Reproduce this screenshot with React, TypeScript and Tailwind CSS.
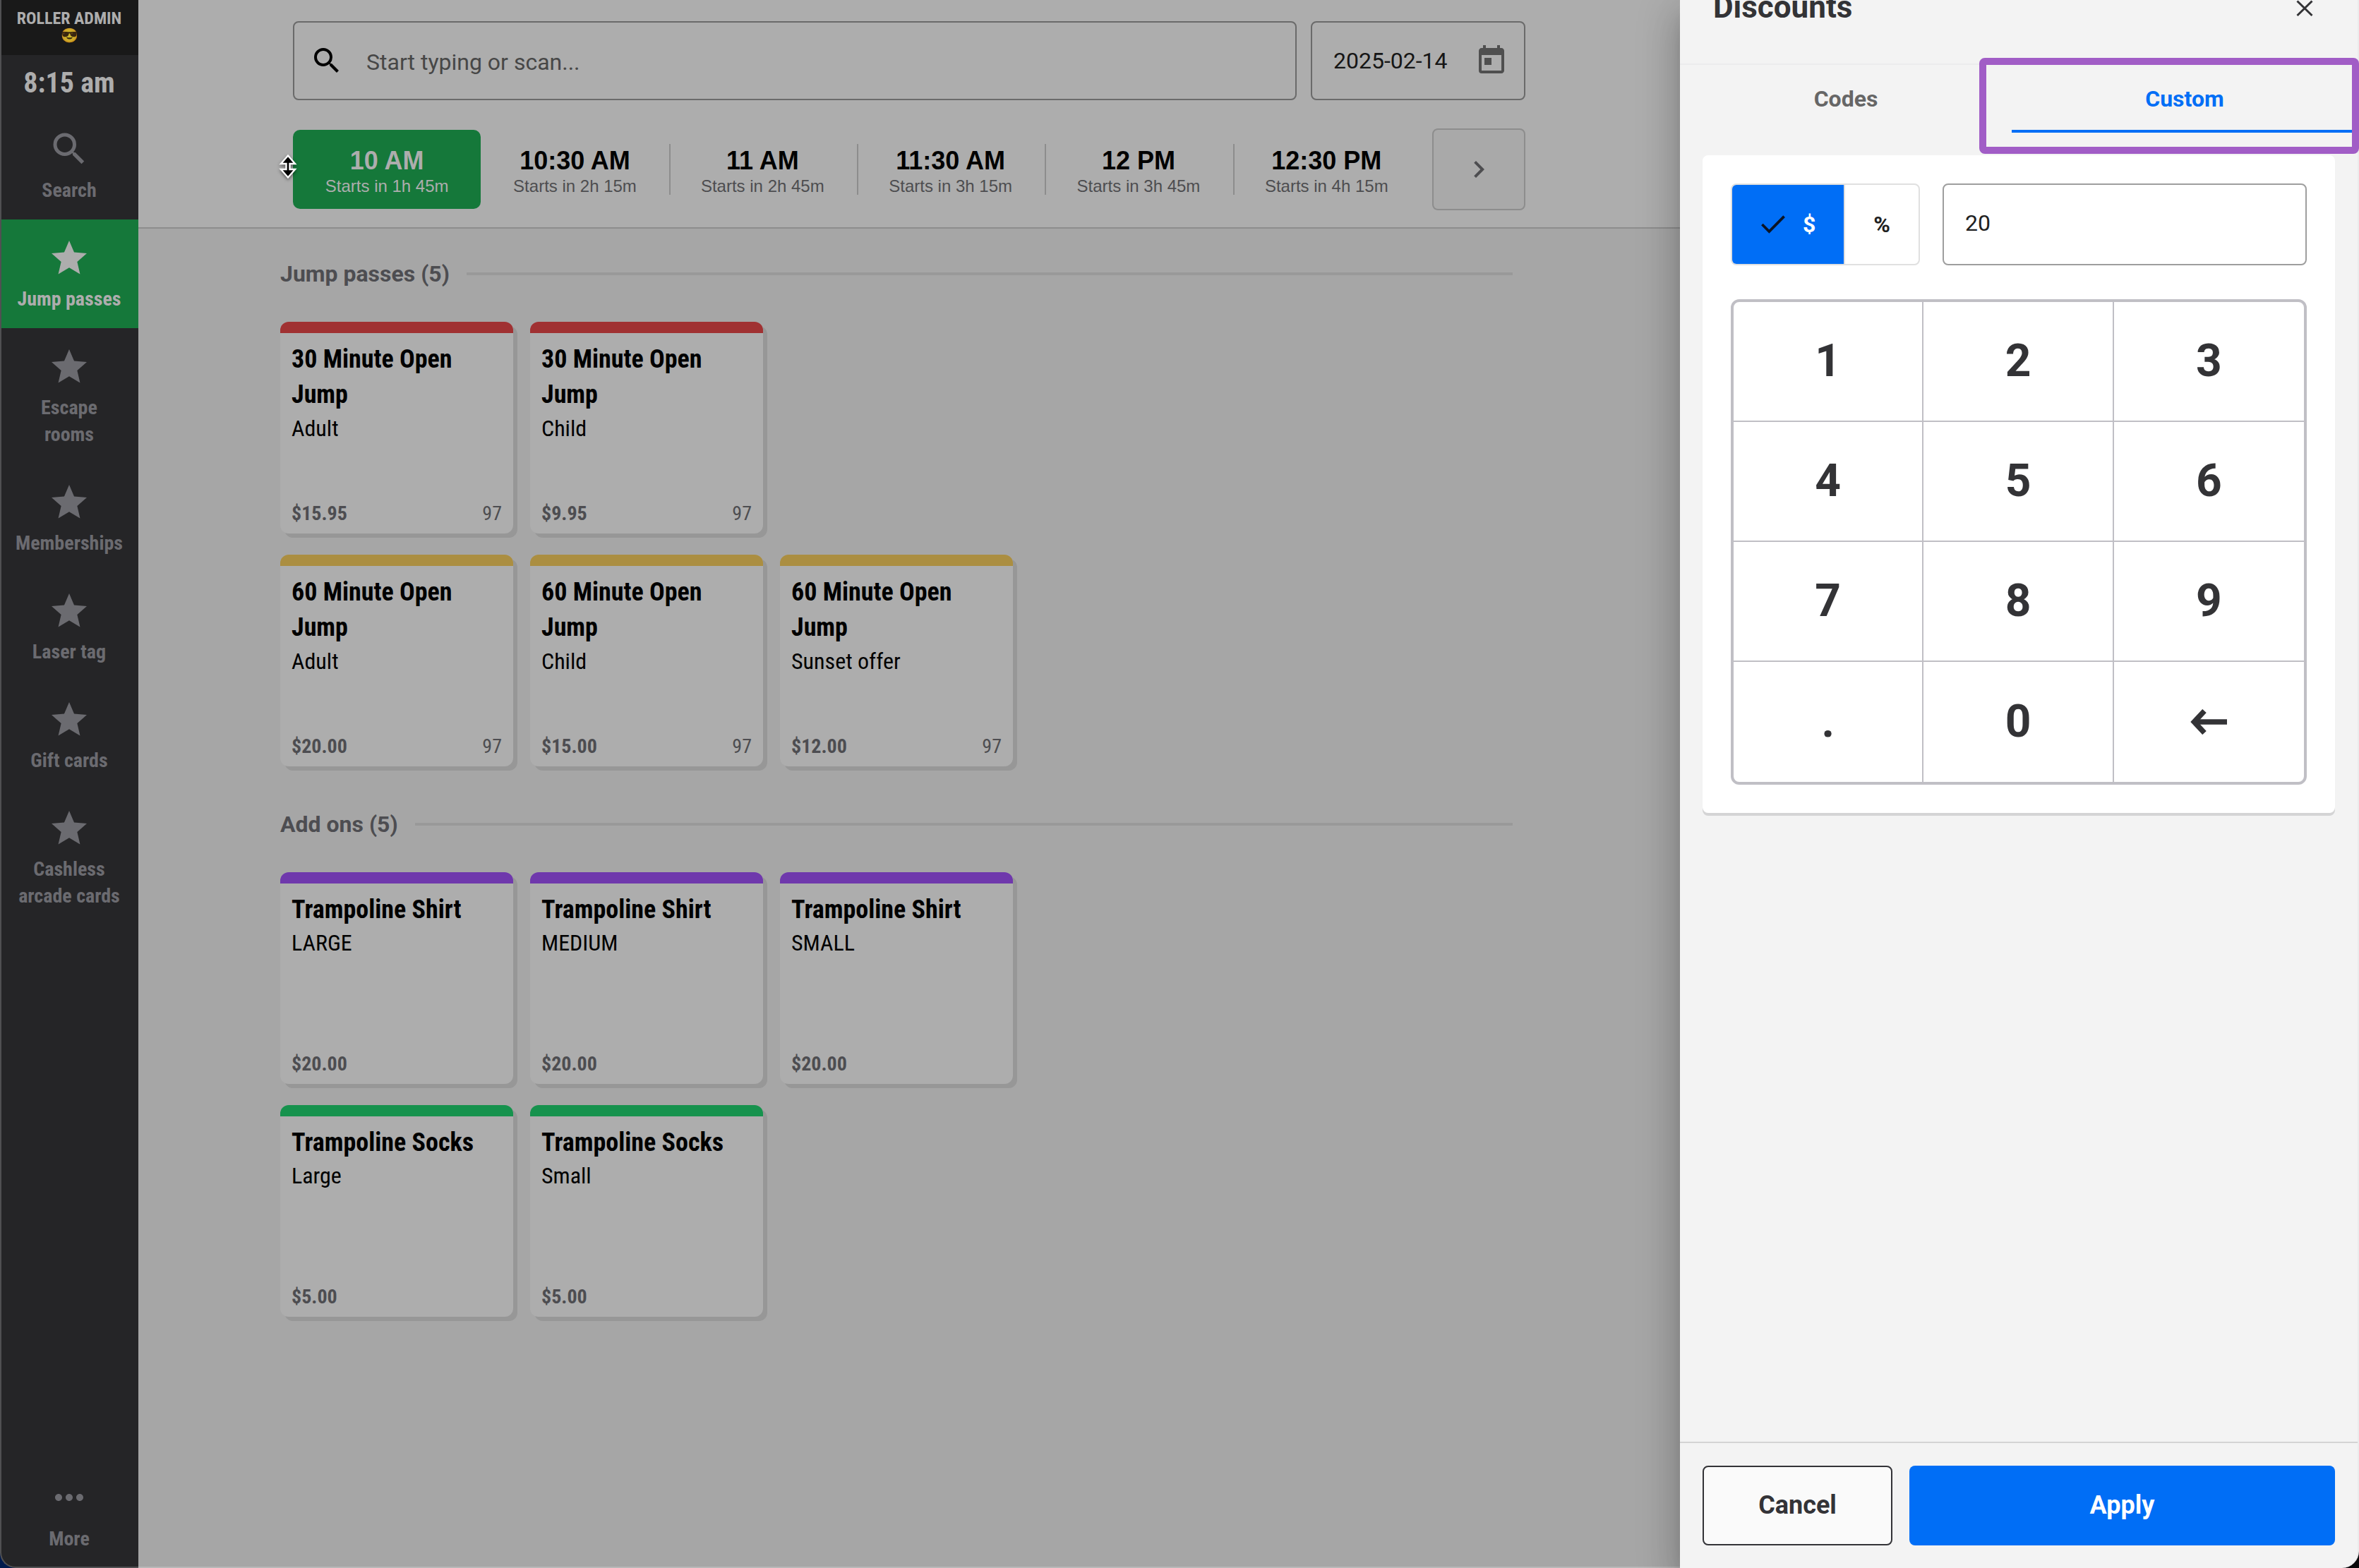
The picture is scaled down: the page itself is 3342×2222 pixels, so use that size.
import { MdChevronRight, MdMoreHoriz, MdSearch, MdStar, MdToday } from "react-icons/md";
import { clsx } from "clsx";

interface Product {
  name: string;
  variant: string;
  price: string;
  stock?: number;
  stripe: string;
}

const RED = "bg-[#a03132]";
const GOLD = "bg-[#ab8e41]";
const PURPLE = "bg-[#6f38ac]";
const GREEN = "bg-[#16924d]";

const navItems = [
  { lines: ["Jump passes"], active: true },
  { lines: ["Escape", "rooms"] },
  { lines: ["Memberships"] },
  { lines: ["Laser tag"] },
  { lines: ["Gift cards"] },
  { lines: ["Cashless", "arcade cards"] },
];

const slots = [
  { time: "10 AM", starts: "Starts in 1h 45m" },
  { time: "10:30 AM", starts: "Starts in 2h 15m" },
  { time: "11 AM", starts: "Starts in 2h 45m" },
  { time: "11:30 AM", starts: "Starts in 3h 15m" },
  { time: "12 PM", starts: "Starts in 3h 45m" },
  { time: "12:30 PM", starts: "Starts in 4h 15m" },
];

const sections: { title: string; rows: Product[][] }[] = [
  {
    title: "Jump passes (5)",
    rows: [
      [
        { name: "30 Minute Open Jump", variant: "Adult", price: "$15.95", stock: 97, stripe: RED },
        { name: "30 Minute Open Jump", variant: "Child", price: "$9.95", stock: 97, stripe: RED },
      ],
      [
        { name: "60 Minute Open Jump", variant: "Adult", price: "$20.00", stock: 97, stripe: GOLD },
        { name: "60 Minute Open Jump", variant: "Child", price: "$15.00", stock: 97, stripe: GOLD },
        { name: "60 Minute Open Jump", variant: "Sunset offer", price: "$12.00", stock: 97, stripe: GOLD },
      ],
    ],
  },
  {
    title: "Add ons (5)",
    rows: [
      [
        { name: "Trampoline Shirt", variant: "LARGE", price: "$20.00", stripe: PURPLE },
        { name: "Trampoline Shirt", variant: "MEDIUM", price: "$20.00", stripe: PURPLE },
        { name: "Trampoline Shirt", variant: "SMALL", price: "$20.00", stripe: PURPLE },
      ],
      [
        { name: "Trampoline Socks", variant: "Large", price: "$5.00", stripe: GREEN },
        { name: "Trampoline Socks", variant: "Small", price: "$5.00", stripe: GREEN },
      ],
    ],
  },
];

const keys = ["1", "2", "3", "4", "5", "6", "7", "8", "9", ".", "0", "back"];

function Sidebar() {
  return (
    <aside className="flex w-[196px] shrink-0 flex-col rounded-bl-[22px] border-b-2 border-l-2 border-[#505052] bg-[#252527] font-['Roboto_Condensed',Roboto,sans-serif] font-bold text-[#6b6b70] font-stretch-75%">
      <div className="h-[78px] bg-[#191919] pt-[14px] pr-[2px] text-center text-[24px] leading-[24px] text-[#adadad]">
        <div>ROLLER ADMIN</div>
        <div className="text-[20px] opacity-80">😎</div>
      </div>
      <div className="h-[79px] pr-[2px] text-center text-[40px] leading-[79px] text-[#adadad]">8:15 am</div>
      <div className="flex h-[154px] flex-col items-center pt-[24px] pr-[2px]">
        <MdSearch className="size-[60px]" />
        <span className="mt-[10px] text-[28px] leading-[38px]">Search</span>
      </div>
      {navItems.map((item) => (
        <div
          key={item.lines[0]}
          className={clsx(
            "flex flex-col items-center pt-[25px] pr-[2px] pb-[22px]",
            item.active && "bg-[#15783a] text-[#adadad]"
          )}
        >
          <MdStar className="mb-[9px] size-[60px]" />
          {item.lines.map((line) => (
            <span key={line} className="text-[28px] leading-[38px]">{line}</span>
          ))}
        </div>
      ))}
      <div className="mt-auto flex h-[154px] flex-col items-center pt-[26px] pr-[2px]">
        <MdMoreHoriz className="size-[60px]" />
        <span className="mt-[10px] text-[28px] leading-[38px]">More</span>
      </div>
    </aside>
  );
}

function ResizeCursor() {
  return (
    <svg className="absolute top-[217px] left-[392px] h-[38px] w-[32px] drop-shadow-[0_2px_2px_rgba(0,0,0,0.5)]" viewBox="0 0 32 38">
      <path
        d="M16 3.5 L26 15 H18.5 V23 H26 L16 34.5 L6 23 H13.5 V15 H6 Z"
        fill="#000"
        stroke="#fff"
        strokeWidth="2.4"
      />
    </svg>
  );
}

function TopBar() {
  return (
    <header className="h-[324px] border-b-2 border-[#8d8d8d] bg-[#adadad] pt-[30px] pl-[219px]">
      <div className="flex h-[112px] w-[1746px] gap-5">
        <div className="flex flex-1 items-center rounded-[8px] border-2 border-[#6a6a6a] pl-[22px]">
          <MdSearch className="size-[48px] text-black" />
          <span className="ml-[32px] pt-[3px] text-[32px] text-[#474747]">Start typing or scan...</span>
        </div>
        <div className="flex w-[304px] items-center rounded-[8px] border-2 border-[#6a6a6a] pl-[30px]">
          <span className="text-[32px] text-[#161616]">2025-02-14</span>
          <MdToday className="ml-[38px] size-[48px] text-[#4f4f4f]" />
        </div>
      </div>
      <div className="mt-10 flex h-[116px] w-[1746px] items-center font-['Liberation_Sans',Arial,sans-serif]">
        {slots.map((slot, i) => (
          <div
            key={slot.time}
            className={clsx(
              "flex h-[112px] flex-1 items-center",
              i === 0 && "rounded-[10px] bg-[#15783a] text-[#adadad]"
            )}
          >
            <div
              className={clsx(
                "h-[72px] flex-1 text-center",
                i > 1 && "border-l-2 border-[#8d8d8d] pr-[3px]"
              )}
            >
              <div className={clsx("mt-1 text-[36px] leading-[40px] font-bold", i > 0 && "text-black")}>{slot.time}</div>
              <div className={clsx("text-[24px] leading-[32px]", i > 0 && "text-[#4d4d50]")}>{slot.starts}</div>
            </div>
          </div>
        ))}
        <button className="ml-4 flex h-[116px] w-[132px] items-center justify-center rounded-[8px] border-2 border-[#8d8d8d] bg-[#a9a9a9]">
          <MdChevronRight className="size-[48px] text-[#4d4d50]" />
        </button>
      </div>
    </header>
  );
}

function ProductCard({ name, variant, price, stock, stripe }: Product) {
  return (
    <div className="flex h-[300px] w-[330px] flex-col overflow-hidden rounded-[12px] bg-[#adadad] font-['Roboto_Condensed',Roboto,sans-serif] shadow-[6px_6px_0_#979797] font-stretch-75%">
      <div className={clsx("h-4 shrink-0", stripe)} />
      <div className="flex flex-1 flex-col px-4 pt-[11.5px] pb-[11px]">
        <div className="text-[36px] leading-[50.5px] font-bold text-black">{name}</div>
        <div className="text-[32px] leading-[44px] text-black">{variant}</div>
        <div className="mt-auto flex justify-between text-[28px] leading-[34px] text-[#4d4d51]">
          <span className="font-bold">{price}</span>
          <span>{stock}</span>
        </div>
      </div>
    </div>
  );
}

function Catalogue() {
  return (
    <div className="flex flex-col gap-[62px] pt-[44px] pl-[201px]">
      {sections.map((section) => (
        <section key={section.title} className="w-[1746px]">
          <div className="flex items-center gap-6">
            <h2 className="text-[32px] leading-[40px] font-bold text-[#4d4d51]">{section.title}</h2>
            <div className="h-1 flex-1 bg-[#999999]" />
          </div>
          <div className="mt-12 flex flex-col gap-[30px]">
            {section.rows.map((row, i) => (
              <div key={i} className="flex gap-6">
                {row.map((product, j) => (
                  <ProductCard key={j} {...product} />
                ))}
              </div>
            ))}
          </div>
        </section>
      ))}
    </div>
  );
}

function Keypad() {
  return (
    <div className="mt-12 grid h-[688px] grid-cols-3 grid-rows-4 rounded-[12px] border-4 border-[#c0bfc5] text-[64px] font-bold text-[#333336]">
      {keys.map((key, i) => (
        <div
          key={key}
          className={clsx(
            "flex items-center justify-center border-[#c0bfc5]",
            i % 3 < 2 && "border-r-2",
            i < 9 && "border-b-2"
          )}
        >
          {key === "back" ? (
            <svg className="h-[36px] w-[52px]" viewBox="0 0 52 36" fill="none" stroke="currentColor" strokeWidth="7.6">
              <path d="M52 18 H6" />
              <path d="M20 2.5 L5.5 18 L20 33.5" />
            </svg>
          ) : (
            key
          )}
        </div>
      ))}
    </div>
  );
}

function DiscountDrawer() {
  return (
    <div className="absolute top-0 left-[2380px] flex h-[2222px] w-[962px] flex-col rounded-br-[24px] border-r-2 border-[#ebebec] bg-[#f3f3f3] shadow-[0_16px_20px_-10px_rgba(0,0,0,0.2),0_32px_48px_4px_rgba(0,0,0,0.14),0_12px_60px_10px_rgba(0,0,0,0.12)]">
      <div className="flex h-[92px] items-start justify-between overflow-hidden border-b-2 border-[#ececed] pr-[63px] pl-[47px]">
        <h1 className="-mt-[14px] text-[44px] leading-[48px] font-bold text-[#333336]">Discounts</h1>
        <svg className="h-6 w-6" viewBox="0 0 24 24" fill="none" stroke="#333336" strokeWidth="3">
          <path d="M1.5 1.5 L22.5 22 M22.5 1.5 L1.5 22" />
        </svg>
      </div>
      <div className="flex h-[128px] text-center text-[32px] leading-[40px] font-bold">
        <div className="w-[470px] pt-[28px] text-[#666666]">Codes</div>
        <div className="h-[96px] w-[490px] border-b-4 border-[#006ef6] pt-[28px] text-[#006ef6]">Custom</div>
      </div>
      <div className="mx-[32px] h-[932px] rounded-[8px] bg-white px-[40px] pt-[40px] shadow-[0_4px_0_#d4d4d5]">
        <div className="flex h-[116px] gap-[32px]">
          <div className="flex w-[268px] overflow-hidden rounded-[8px] border-2 border-[#e0e0e0] text-[32px] font-bold">
            <div className="flex w-[158px] items-center bg-[#006ef6] pl-[41px] text-white">
              <svg className="h-[26px] w-[34px]" viewBox="0 0 34 26" fill="none" stroke="#0b1424" strokeWidth="3.8">
                <path d="M1.4 13 L11.4 23 L32.6 1.6" />
              </svg>
              <span className="ml-[25px]">$</span>
            </div>
            <div className="flex flex-1 items-center justify-center border-l-2 border-[#e0e0e0] font-bold text-[#212121]">%</div>
          </div>
          <div className="flex-1 rounded-[8px] border-2 border-[#9e9e9e] pt-[34px] pl-[30px] text-[32px] leading-[40px] text-[#212121]">20</div>
        </div>
        <Keypad />
      </div>
      <div className="mt-auto flex h-[179px] gap-6 border-t-2 border-[#d4d4d4] px-[32px] pt-[32px] text-[36px] font-bold">
        <button className="h-[113px] w-[269px] rounded-[8px] border-2 border-[#333337] bg-[#fafafa] pb-[2px] text-[#333337]">Cancel</button>
        <button className="h-[113px] flex-1 rounded-[8px] bg-[#006ef6] pb-[2px] text-white">Apply</button>
      </div>
    </div>
  );
}

export default function App() {
  return (
    <div className="relative h-[2222px] w-[3342px] overflow-hidden bg-linear-to-r from-[#001a4d] to-[#0c0c0e] font-['Roboto',sans-serif]">
      <div className="flex h-full">
        <Sidebar />
        <main className="flex-1 rounded-br-[28px] border-b-2 border-[#b8b8b8] bg-[#a6a6a6]">
          <TopBar />
          <Catalogue />
        </main>
      </div>
      <ResizeCursor />
      <DiscountDrawer />
      {/* highlight around the active tab */}
      <div className="absolute top-[82px] left-[2804px] h-[136px] w-[538px] rounded-[8px] border-[10px] border-[#a15dc6]" />
    </div>
  );
}
